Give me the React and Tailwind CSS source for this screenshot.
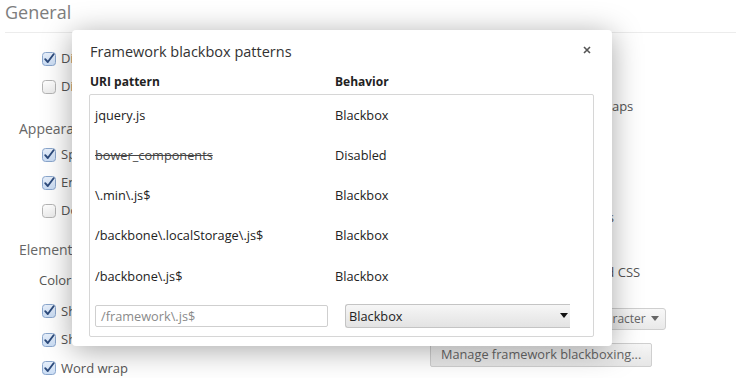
import React from 'react';

const font = { fontFamily: '"Open Sans", "DejaVu Sans", sans-serif' };

const Checkbox = ({ checked }) => (
  <svg width="14" height="14" viewBox="0 0 14 14" className="shrink-0">
    <defs>
      <linearGradient id={checked ? 'cbOn' : 'cbOff'} x1="0" y1="0" x2="0" y2="1">
        <stop offset="0" stopColor={checked ? '#e8f0fb' : '#ffffff'} />
        <stop offset="1" stopColor={checked ? '#c9dcf4' : '#ececec'} />
      </linearGradient>
    </defs>
    <rect x="0.5" y="0.5" width="13" height="13" rx="3" fill={`url(#${checked ? 'cbOn' : 'cbOff'})`} stroke={checked ? '#8aa6cc' : '#b4b4b4'} />
    {checked && (
      <path d="M3.2 7.2 L5.8 10 L11.6 2.2" fill="none" stroke="#2d4b7c" strokeWidth="1.9" strokeLinecap="round" strokeLinejoin="round" />
    )}
  </svg>
);

const CheckRow = ({ checked, label, tall }) => (
  <div className={`${tall ? 'h-[28.5px]' : 'h-[28px]'} flex items-center gap-[5px] text-[13px] text-[#555] whitespace-nowrap`}>
    <Checkbox checked={checked} />
    <span>{label}</span>
  </div>
);

const SourceRow = ({ checked, label }) => (
  <div className="h-[27.75px] flex items-center gap-[5px] text-[13px] text-[#555] whitespace-nowrap">
    <Checkbox checked={checked} />
    <span>{label}</span>
  </div>
);

const patterns = [
  { uri: 'jquery.js', behavior: 'Blackbox' },
  { uri: 'bower_components', behavior: 'Disabled', off: true },
  { uri: '\\.min\\.js$', behavior: 'Blackbox' },
  { uri: '/backbone\\.localStorage\\.js$', behavior: 'Blackbox' },
  { uri: '/backbone\\.js$', behavior: 'Blackbox' },
];

const Dialog = () => (
  <div className="absolute top-[30px] left-[72px] w-[540px] bg-white rounded-[4px] shadow-[0_4px_30px_rgba(0,0,0,0.35)] pt-[13px] pl-[17px] pr-[18px] pb-[9px] text-[#222]">
    <div className="flex items-center justify-between h-[18px]">
      <span className="text-[14.5px] leading-[18px] pl-[1px] text-[#333]">Framework blackbox patterns</span>
      <svg width="8" height="8" viewBox="0 0 8 8" className="mr-[3px] -mt-[4px]">
        <path d="M1 1 L7 7 M7 1 L1 7" stroke="#555" strokeWidth="1.6" />
      </svg>
    </div>
    <div className="flex mt-[13px] h-[16px] items-center text-[12px] font-bold text-[#222]">
      <span className="w-[246px] pl-[1px]">URI pattern</span>
      <span>Behavior</span>
    </div>
    <div className="mt-[4px] border border-[#d6d6d6] rounded-[2px] pb-[8px]">
      {patterns.map((p) => (
        <div key={p.uri} className="h-[40.25px] flex items-center text-[12.75px] text-[#222]">
          <span className={`w-[245px] pl-[5px] ${p.off ? 'line-through text-[#444]' : ''}`}>{p.uri}</span>
          <span>{p.behavior}</span>
        </div>
      ))}
      <div className="flex items-center pt-[8px] pl-[5px]">
        <div className="w-[233px] h-[22px] border border-[#cfcfcf] rounded-[2px] flex items-center pl-[5px] text-[12.75px] text-[#8a8a8a]">
          /framework\.js$
        </div>
        <div className="ml-[17px] w-[225px] h-[24px] border border-[#c4c4c4] border-r-0 rounded-l-[3px] bg-gradient-to-b from-[#f6f6f6] to-[#e3e3e3] flex items-center justify-between pl-[3px] pr-[2px] text-[12.75px] text-[#222]">
          <span>Blackbox</span>
          <svg width="8" height="6" viewBox="0 0 8 6">
            <path d="M0 0 H8 L4 5 Z" fill="#111" />
          </svg>
        </div>
      </div>
    </div>
  </div>
);

const App = () => {
  return (
    <div className="relative w-[736px] h-[378px] overflow-hidden bg-white" style={font}>
      <div className="ml-[5px] h-[33px] border-b border-[#ececec] text-[18px] leading-[24px] text-[#7d7d7d]">General</div>
      <div className="flex">
        <div className="w-[411px] pl-[19px] pt-[12px]">
          <div className="pl-[23px]">
            <CheckRow checked label="Disable cache (while DevTools is open)" />
            <CheckRow label="Disable JavaScript" />
          </div>
          <div className="mt-[17px] h-[20px] flex items-center text-[14px] text-[#666]">Appearance</div>
          <div className="pl-[23px] mt-[3px]">
            <CheckRow checked label="Split panels vertically when docked to right" />
            <CheckRow checked label="Enable new Advanced Perf instrumentation" />
            <CheckRow label="Don't show Chrome Data Saver warning" />
          </div>
          <div className="mt-[14px] h-[20px] flex items-center text-[14px] text-[#666]">Elements</div>
          <div className="mt-[12px] h-[20px] pl-[20px] flex items-center text-[13px] text-[#555]">Color format:</div>
          <div className="pl-[23px] mt-[6px]">
            <CheckRow tall checked label="Show user agent shadow DOM" />
            <CheckRow tall checked label="Show rulers on hover" />
            <CheckRow tall checked label="Word wrap" />
          </div>
        </div>
        <div className="pt-[12px] pl-[19px]">
          <div className="h-[20px] flex items-center text-[14px] text-[#666]">Sources</div>
          <div>
            <SourceRow label="Search in content scripts" />
            <SourceRow checked label="Enable JavaScript source maps" />
            <SourceRow checked label="Detect indentation" />
            <SourceRow label="Reveal in navigator" />
            <SourceRow checked label="Show navigator" />
            <SourceRow label="Show whitespace in editors" />
            <SourceRow checked label="Enable CSS source maps" />
            <SourceRow checked label="Auto-refresh the generated CSS" />
          </div>
          <div className="mt-[18px] h-[28px] flex items-center text-[13px] text-[#555]">
            <span className="w-[136px]">Default indentation:</span>
            <div className="w-[100px] h-[22px] border border-[#cfcfcf] rounded-[3px] bg-gradient-to-b from-[#f8f8f8] to-[#e9e9e9] flex items-center justify-between pl-[2px] pr-[6px] text-[12px] text-[#666]">
              <span>Tab character</span>
              <svg width="8" height="6" viewBox="0 0 8 6">
                <path d="M0 0 H8 L4 5 Z" fill="#666" />
              </svg>
            </div>
          </div>
          <div className="mt-[10px] h-[24px] inline-flex items-center border border-[#cfcfcf] rounded-[2px] bg-gradient-to-b from-[#f6f6f6] to-[#e6e6e6] px-[10px] text-[12.75px] text-[#666]">
            Manage framework blackboxing...
          </div>
        </div>
      </div>
      <Dialog />
    </div>
  );
};

export default App;
